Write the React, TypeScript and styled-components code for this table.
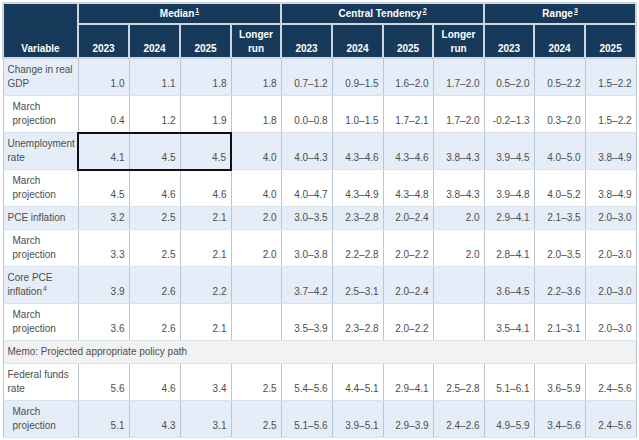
import React from "react";
import styled, { createGlobalStyle } from "styled-components";

const colors = {
  navy: "#183a5a",
  headLine: "#cdd6df",
  blue: "#e5eef8",
  white: "#ffffff",
  memo: "#f2f2f2",
  vLine: "#b9c6d3",
  hLine: "#d9e1e9",
  text: "#4d4d4d",
};

type Tone = "blue" | "white" | "memo";

const GlobalStyle = createGlobalStyle`
  body {
    margin: 0;
    background: #ffffff;
    font-family: "Liberation Sans", Arial, sans-serif;
  }
`;

const Page = styled.div`
  padding: 2px;
`;

const Table = styled.table`
  width: 634px;
  table-layout: fixed;
  border-collapse: collapse;
  border: 1px solid #a8b6c4;
  font-size: 10px;
  line-height: 14px;
`;

const HeadCell = styled.th<{ $valign: "bottom" | "middle" }>`
  background: ${colors.navy};
  color: #ffffff;
  font-weight: bold;
  text-align: center;
  vertical-align: ${(p) => p.$valign};
  padding: ${(p) => (p.$valign === "middle" ? "3px 2px 2px" : "3px 2px 1px")};
  border: 2px solid ${colors.headLine};
  white-space: nowrap;
`;

const Sup = styled.span<{ $link?: boolean }>`
  font-size: 7px;
  line-height: 0;
  position: relative;
  top: -4px;
  margin-left: 1px;
  text-decoration: ${(p) => (p.$link ? "underline" : "none")};
`;

const Cell = styled.td<{
  $tone: Tone;
  $sub?: boolean;
  $num?: boolean;
  $boxTop?: boolean;
  $boxLeft?: boolean;
  $boxRight?: boolean;
}>`
  background: ${(p) => colors[p.$tone]};
  color: ${colors.text};
  text-align: ${(p) => (p.$num ? "right" : "left")};
  vertical-align: bottom;
  padding: 4px 4px 4px ${(p) => (p.$sub ? 9 : 4)}px;
  white-space: nowrap;
  border-top: ${(p) => (p.$boxTop ? "2px solid #111" : `1px solid ${colors.hLine}`)};
  border-bottom: ${(p) => (p.$boxTop ? "2px solid #111" : `1px solid ${colors.hLine}`)};
  border-left: ${(p) => (p.$boxLeft ? "2px solid #111" : `1px solid ${colors.vLine}`)};
  border-right: ${(p) => (p.$boxRight ? "2px solid #111" : `1px solid ${colors.vLine}`)};
`;

interface Projection {
  label: React.ReactNode;
  sub?: boolean;
  tone: Tone;
  values: string[];
  boxed?: boolean;
}

const rows: Projection[] = [
  {
    label: <>Change in real<br />GDP</>,
    tone: "blue",
    values: ["1.0", "1.1", "1.8", "1.8", "0.7–1.2", "0.9–1.5", "1.6–2.0", "1.7–2.0", "0.5–2.0", "0.5–2.2", "1.5–2.2"],
  },
  {
    label: <>March<br />projection</>,
    sub: true,
    tone: "white",
    values: ["0.4", "1.2", "1.9", "1.8", "0.0–0.8", "1.0–1.5", "1.7–2.1", "1.7–2.0", "-0.2–1.3", "0.3–2.0", "1.5–2.2"],
  },
  {
    label: <>Unemployment<br />rate</>,
    tone: "blue",
    boxed: true,
    values: ["4.1", "4.5", "4.5", "4.0", "4.0–4.3", "4.3–4.6", "4.3–4.6", "3.8–4.3", "3.9–4.5", "4.0–5.0", "3.8–4.9"],
  },
  {
    label: <>March<br />projection</>,
    sub: true,
    tone: "white",
    values: ["4.5", "4.6", "4.6", "4.0", "4.0–4.7", "4.3–4.9", "4.3–4.8", "3.8–4.3", "3.9–4.8", "4.0–5.2", "3.8–4.9"],
  },
  {
    label: "PCE inflation",
    tone: "blue",
    values: ["3.2", "2.5", "2.1", "2.0", "3.0–3.5", "2.3–2.8", "2.0–2.4", "2.0", "2.9–4.1", "2.1–3.5", "2.0–3.0"],
  },
  {
    label: <>March<br />projection</>,
    sub: true,
    tone: "white",
    values: ["3.3", "2.5", "2.1", "2.0", "3.0–3.8", "2.2–2.8", "2.0–2.2", "2.0", "2.8–4.1", "2.0–3.5", "2.0–3.0"],
  },
  {
    label: <>Core PCE<br />inflation<Sup>4</Sup></>,
    tone: "blue",
    values: ["3.9", "2.6", "2.2", "", "3.7–4.2", "2.5–3.1", "2.0–2.4", "", "3.6–4.5", "2.2–3.6", "2.0–3.0"],
  },
  {
    label: <>March<br />projection</>,
    sub: true,
    tone: "white",
    values: ["3.6", "2.6", "2.1", "", "3.5–3.9", "2.3–2.8", "2.0–2.2", "", "3.5–4.1", "2.1–3.1", "2.0–3.0"],
  },
];

const policyRows: Projection[] = [
  {
    label: <>Federal funds<br />rate</>,
    tone: "white",
    values: ["5.6", "4.6", "3.4", "2.5", "5.4–5.6", "4.4–5.1", "2.9–4.1", "2.5–2.8", "5.1–6.1", "3.6–5.9", "2.4–5.6"],
  },
  {
    label: <>March<br />projection</>,
    sub: true,
    tone: "blue",
    values: ["5.1", "4.3", "3.1", "2.5", "5.1–5.6", "3.9–5.1", "2.9–3.9", "2.4–2.6", "4.9–5.9", "3.4–5.6", "2.4–5.6"],
  },
];

const widths = [75, 51, 51, 51, 50, 51, 51, 50, 51, 50, 51, 51];
const groups = [
  { title: "Median", note: "1", years: ["2023", "2024", "2025"], longer: true },
  { title: "Central Tendency", note: "2", years: ["2023", "2024", "2025"], longer: true },
  { title: "Range", note: "3", years: ["2023", "2024", "2025"], longer: false },
];

const DataRow = ({ row }: { row: Projection }) => (
  <tr>
    <Cell $tone={row.tone} $sub={row.sub}>
      {row.label}
    </Cell>
    {row.values.map((v, i) => (
      <Cell
        key={i}
        $tone={row.tone}
        $num
        $boxTop={row.boxed && i < 3}
        $boxLeft={row.boxed && i === 0}
        $boxRight={row.boxed && i === 2}
      >
        {v}
      </Cell>
    ))}
  </tr>
);

function App() {
  return (
    <>
      <GlobalStyle />
      <Page>
        <Table>
          <colgroup>
            {widths.map((w, i) => (
              <col key={i} style={{ width: w }} />
            ))}
          </colgroup>
          <thead>
            <tr>
              <HeadCell rowSpan={2} $valign="bottom">
                Variable
              </HeadCell>
              {groups.map((g) => (
                <HeadCell key={g.title} colSpan={g.longer ? 4 : 3} $valign="middle">
                  {g.title}
                  <Sup $link>{g.note}</Sup>
                </HeadCell>
              ))}
            </tr>
            <tr>
              {groups.map((g) => (
                <React.Fragment key={g.title}>
                  {g.years.map((y) => (
                    <HeadCell key={y} $valign="bottom">
                      {y}
                    </HeadCell>
                  ))}
                  {g.longer && (
                    <HeadCell $valign="bottom">
                      Longer
                      <br />
                      run
                    </HeadCell>
                  )}
                </React.Fragment>
              ))}
            </tr>
          </thead>
          <tbody>
            {rows.map((r, i) => (
              <DataRow key={i} row={r} />
            ))}
            <tr>
              <Cell colSpan={12} $tone="memo">
                Memo: Projected appropriate policy path
              </Cell>
            </tr>
            {policyRows.map((r, i) => (
              <DataRow key={i} row={r} />
            ))}
          </tbody>
        </Table>
      </Page>
    </>
  );
}

export default App;
